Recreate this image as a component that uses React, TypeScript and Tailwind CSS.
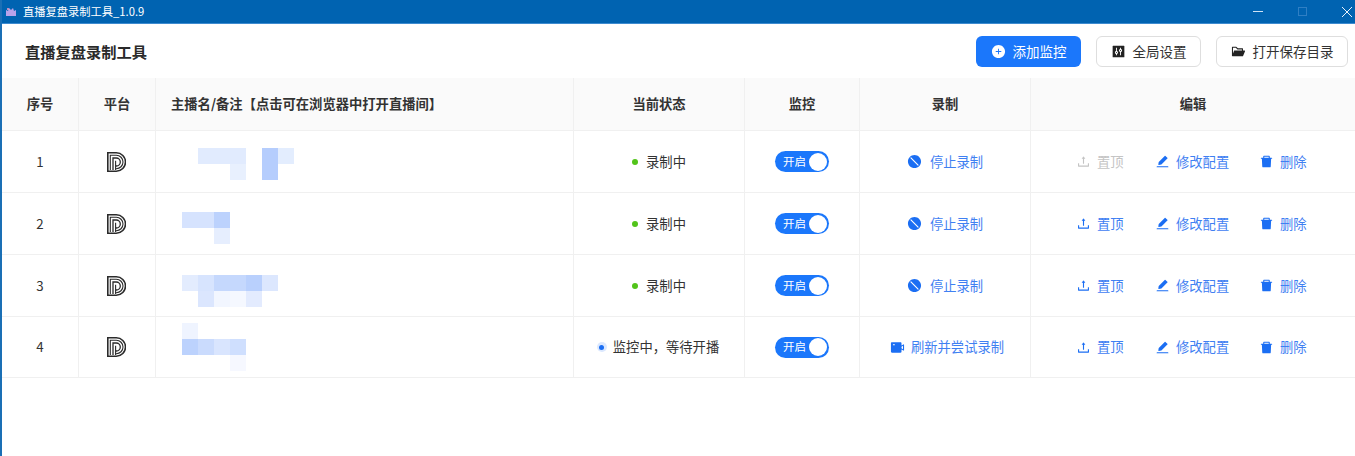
import type { ReactNode } from "react";
import {
  AiFillControl,
  AiFillDelete,
  AiFillEdit,
  AiFillFolderOpen,
  AiFillPlusCircle,
  AiFillStop,
  AiFillVideoCamera,
  AiOutlineUpload,
} from "react-icons/ai";

const columns = "grid grid-cols-[77px_77px_418px_171px_115px_171px_1fr]";
const cjk = "font-['Microsoft_YaHei','Noto_Sans_CJK_SC','Noto_Sans',sans-serif]";

const e = "bg-transparent";

const rows = [
  {
    id: 1,
    offset: "mt-[17px]",
    mosaicCols: "grid-cols-[repeat(7,16px)]",
    mosaic: [e, "bg-[#e1ebfe]", "bg-[#e1ebfe]", "bg-[#e1ebfe]", e, "bg-[#b5cdfd]", "bg-[#e3edfe]", e, e, e, "bg-[#e8f0fe]", e, "bg-[#b5cdfd]", e],
    status: "录制中",
    monitoring: false,
    topDisabled: true,
  },
  {
    id: 2,
    offset: "mt-[19px]",
    mosaicCols: "grid-cols-[repeat(3,16px)]",
    mosaic: ["bg-[#d6e3fe]", "bg-[#d6e3fe]", "bg-[#bcd2fd]", e, e, "bg-[#e6eefe]"],
    status: "录制中",
    monitoring: false,
    topDisabled: false,
  },
  {
    id: 3,
    offset: "mt-[20px]",
    mosaicCols: "grid-cols-[repeat(6,16px)]",
    mosaic: ["bg-[#e3ecfe]", "bg-[#d7e4fe]", "bg-[#c5d8fd]", "bg-[#c5d8fd]", "bg-[#b9d0fd]", "bg-[#dce7fe]", e, "bg-[#dbe6fe]", "bg-[#f2f6ff]", "bg-[#f5f8ff]", "bg-[#e3ebfe]", e],
    status: "录制中",
    monitoring: false,
    topDisabled: false,
  },
  {
    id: 4,
    offset: "mt-[6px]",
    mosaicCols: "grid-cols-[repeat(4,16px)]",
    mosaic: ["bg-[#eff4ff]", e, e, e, "bg-[#bcd2fd]", "bg-[#cadbfd]", "bg-[#d9e5fe]", "bg-[#cfdffe]", e, e, e, "bg-[#f6f8ff]"],
    status: "监控中，等待开播",
    monitoring: true,
    topDisabled: false,
  },
];

function PlatformLogo() {
  return (
    <svg viewBox="0 0 19 20" className="-ml-[1px] h-5 w-[19px] text-[#2b2b2b]" fill="none" stroke="currentColor">
      <path d="M.8.8H9.3a9.2 9.2 0 0 1 0 18.4H.8z" strokeWidth="1.6" />
      <path d="M3.3 18V3.3h6a6.7 6.7 0 0 1 0 13.4H8.6" strokeWidth="1.1" />
      <path d="M6 18V6h3.3a4 4 0 0 1 0 8H8.6" strokeWidth="1.3" />
      <path d="M8.6 18V8.8" strokeWidth="1.1" />
    </svg>
  );
}

function ToolButton({ icon, label, wide }: { icon: ReactNode; label: string; wide: string }) {
  return (
    <button
      type="button"
      className={`flex h-[31px] ${wide} items-center justify-center gap-[7px] rounded-md border border-[#dedede] bg-white text-[13.5px] text-[#333]`}
    >
      {icon}
      {label}
    </button>
  );
}

function LinkAction({ icon, label, disabled, width }: { icon: ReactNode; label: string; disabled?: boolean; width?: string }) {
  return (
    <span
      className={`flex items-center gap-[6px] whitespace-nowrap text-[13.3px] ${width ?? ""} ${
        disabled ? "text-[#c4c4c4]" : "text-[#3f80f2]"
      }`}
    >
      <span className={disabled ? "text-[#c4c4c4]" : "text-[#1b6ef3]"}>{icon}</span>
      {label}
    </span>
  );
}

function HeaderCell({ children, left }: { children: ReactNode; left?: boolean }) {
  return (
    <div
      className={`flex items-center border-r border-[#f0f0f0] font-semibold last:border-r-0 ${
        left ? "pl-[15px]" : "justify-center"
      }`}
    >
      {children}
    </div>
  );
}

function BodyCell({ children }: { children: ReactNode }) {
  return <div className="flex items-center justify-center border-r border-[#f0f0f0] last:border-r-0">{children}</div>;
}

export default function App() {
  return (
    <div className={`flex h-[456px] w-[1355px] flex-col overflow-hidden border-l-2 border-[#1a6fb5] bg-white text-[#333] ${cjk}`}>
      {/* title bar */}
      <div className="-ml-[2px] flex h-[24px] shrink-0 items-center justify-between border-b border-[#3d8bd0] bg-[#0063b1] text-white">
        <div className="flex items-center gap-[6px] pl-[5px] text-[11.25px]">
          <svg viewBox="0 0 12 10" className="h-[10px] w-[12px]">
            <path d="M1 9V3l2 1 1-3 2 2 2-2 1 3 2-1v6z" fill="#b9a2ea" />
            <circle cx="3" cy="2" r="1" fill="#f39ac0" />
          </svg>
          <span>直播复盘录制工具_1.0.9</span>
        </div>
        <div className="flex items-center gap-[35px] pr-[3px]">
          <span className="h-px w-[10px] bg-[#cfe3f5]" />
          <span className="h-[9px] w-[9px] border border-[#2f7fc4]" />
          <svg viewBox="0 0 10 10" className="h-[10px] w-[10px]" stroke="#e8f2fb" strokeWidth="1">
            <path d="M0 0l10 10M10 0L0 10" />
          </svg>
        </div>
      </div>

      {/* toolbar */}
      <div className="flex h-[54px] shrink-0 items-center justify-between pl-[23px] pr-[7px]">
        <h1 className="text-[15.25px] font-bold text-[#2a2a2a]">直播复盘录制工具</h1>
        <div className="flex items-center gap-[15px]">
          <button
            type="button"
            className="flex h-[31px] w-[105px] items-center justify-center gap-[7px] rounded-md bg-[#1b77fb] text-[13.5px] text-white"
          >
            <AiFillPlusCircle size={15} />
            添加监控
          </button>
          <ToolButton icon={<AiFillControl size={15} className="text-[#222]" />} label="全局设置" wide="w-[105px]" />
          <ToolButton icon={<AiFillFolderOpen size={15} className="text-[#222]" />} label="打开保存目录" wide="w-[132px]" />
        </div>
      </div>

      {/* table */}
      <div className="text-[13.3px]">
        <div className={`${columns} h-[52px] bg-[#fafafa]`}>
          <HeaderCell>序号</HeaderCell>
          <HeaderCell>平台</HeaderCell>
          <HeaderCell left>主播名/备注【点击可在浏览器中打开直播间】</HeaderCell>
          <HeaderCell>当前状态</HeaderCell>
          <HeaderCell>监控</HeaderCell>
          <HeaderCell>录制</HeaderCell>
          <HeaderCell>编辑</HeaderCell>
        </div>

        {rows.map((row) => (
          <div key={row.id} className={`${columns} h-[62px] border-t border-[#f0f0f0] last:border-b`}>
            <BodyCell>{row.id}</BodyCell>
            <BodyCell>
              <PlatformLogo />
            </BodyCell>
            <div className="border-r border-[#f0f0f0] pl-[26px]">
              <div className={`grid ${row.mosaicCols} auto-rows-[16px] ${row.offset}`}>
                {row.mosaic.map((color, i) => (
                  <span key={i} className={color} />
                ))}
              </div>
            </div>
            <BodyCell>
              {row.monitoring ? (
                <span className="-ml-[2px] flex items-center gap-[6px]">
                  <span className="flex h-[10px] w-[10px] items-center justify-center rounded-full bg-[#dbe8fe]">
                    <span className="h-[5px] w-[5px] rounded-full bg-[#1b6ef3]" />
                  </span>
                  {row.status}
                </span>
              ) : (
                <span className="flex items-center gap-2">
                  <span className="h-[6px] w-[6px] rounded-full bg-[#52c41a]" />
                  {row.status}
                </span>
              )}
            </BodyCell>
            <BodyCell>
              <span className="flex h-[21px] w-[54px] items-center justify-between rounded-full bg-[#1b77fb] pl-2 pr-[2px] text-[11.5px] text-white">
                开启
                <span className="h-[18px] w-[18px] rounded-full bg-white" />
              </span>
            </BodyCell>
            <BodyCell>
              {row.monitoring ? (
                <LinkAction icon={<AiFillVideoCamera size={15} className="block" />} label="刷新并尝试录制" width="ml-[4px]" />
              ) : (
                <LinkAction icon={<AiFillStop size={15} className="mr-[2px] block" />} label="停止录制" />
              )}
            </BodyCell>
            <div className="flex items-center pl-[45px]">
              <LinkAction
                icon={<AiOutlineUpload size={15} className="block" />}
                label="置顶"
                disabled={row.topDisabled}
                width="w-[79px]"
              />
              <LinkAction icon={<AiFillEdit size={15} className="block" />} label="修改配置" width="w-[104px]" />
              <LinkAction icon={<AiFillDelete size={15} className="block" />} label="删除" />
            </div>
          </div>
        ))}
      </div>
    </div>
  );
}
